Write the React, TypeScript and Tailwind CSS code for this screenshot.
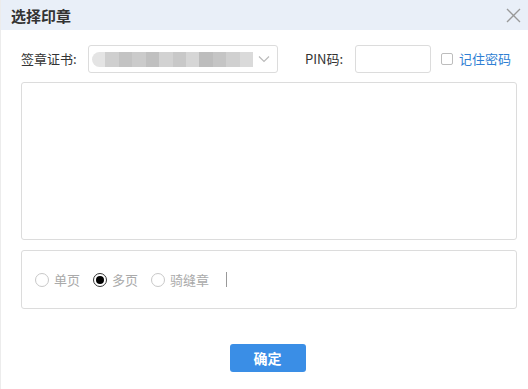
import { useState } from "react";

const mosaic = ["#e4e4e4", "#cfcfcf", "#c3c3c3", "#cbcbcb", "#c0c0c0", "#d2d2d2", "#c8c8c8", "#d6d6d6", "#bdbdbd", "#c5c5c5", "#d0d0d0", "#dadada"];

const Radio = ({ checked, label }: { checked?: boolean; label: string }) => (
  <label className="flex items-center gap-[5px] text-[13px] text-[#aaa]">
    <span
      className={
        "flex items-center justify-center w-[14px] h-[14px] rounded-full border " +
        (checked ? "border-[#333]" : "border-[#c8c8c8]")
      }
    >
      {checked && <span className="w-[8px] h-[8px] rounded-full bg-black" />}
    </span>
    {label}
  </label>
);

const App = () => {
  const [remember, setRemember] = useState(false);

  return (
    <div
      className="w-[528px] h-[389px] bg-white flex flex-col border-l border-[#ececec]"
      style={{ fontFamily: '"Noto Sans CJK SC", "Noto Sans", sans-serif' }}
    >
      <div className="h-[30px] shrink-0 bg-[#e9eff8] flex items-center justify-between pl-[10px] pr-[7px]">
        <h1 className="text-[15px] font-bold text-[#333] leading-none">选择印章</h1>
        <svg width="15" height="15" viewBox="0 0 15 15" className="text-[#999]">
          <path d="M1 1 L14 14 M14 1 L1 14" stroke="currentColor" strokeWidth="1.3" />
        </svg>
      </div>

      <div className="flex-1 flex flex-col px-[20px] pr-[11px]">
        <div className="flex items-center h-[28px] mt-[15px] text-[13px] text-[#333]">
          <span className="w-[67px]">签章证书:</span>
          <div className="w-[190px] h-[28px] border border-[#dcdcdc] rounded-[3px] flex items-center pl-[3px] pr-[7px]">
            <div className="flex-1 h-[15px] flex overflow-hidden rounded-l-full">
              {mosaic.map((c, i) => (
                <div key={i} className="flex-1 h-full" style={{ backgroundColor: c }} />
              ))}
            </div>
            <svg width="12" height="8" viewBox="0 0 12 8" className="ml-[5px] text-[#bbb]">
              <path d="M1 1.5 L6 6.5 L11 1.5" fill="none" stroke="currentColor" strokeWidth="1.2" />
            </svg>
          </div>
          <span className="ml-[27px] w-[50px]">PIN码:</span>
          <input
            type="password"
            className="w-[76px] h-[28px] border border-[#dcdcdc] rounded-[3px] outline-none px-[6px]"
          />
          <label className="ml-[10px] flex items-center gap-[6px] text-[#2f7fd4]">
            <input
              type="checkbox"
              checked={remember}
              onChange={(e) => setRemember(e.target.checked)}
              className="appearance-none w-[12px] h-[12px] border border-[#bdbdbd] rounded-[2px] bg-white"
            />
            记住密码
          </label>
        </div>

        <div className="mt-[9px] h-[158px] border border-[#dcdcdc] rounded-[3px]" />

        <div className="mt-[10px] h-[59px] border border-[#dcdcdc] rounded-[3px] flex items-center pl-[13px] gap-[13px]">
          <Radio label="单页" />
          <Radio checked label="多页" />
          <Radio label="骑缝章" />
          <span className="ml-[4px] w-px h-[15px] bg-[#999]" />
        </div>

        <div className="flex justify-center mt-[35px] pr-[3px]">
          <button className="w-[76px] h-[28px] rounded-[3px] bg-[#3a8ee6] text-white text-[14px] font-bold">
            确定
          </button>
        </div>
      </div>
    </div>
  );
};

export default App;
